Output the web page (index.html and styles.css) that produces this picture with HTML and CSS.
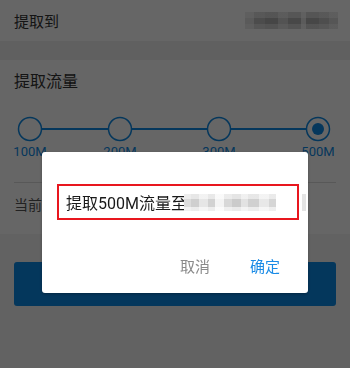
FILE: index.html
```html
<!DOCTYPE html>
<html lang="zh-CN">

<head>
    <meta charset="UTF-8">
    <meta name="viewport" content="width=device-width, initial-scale=1.0">
    <title>提取流量</title>
    <link rel="stylesheet" href="styles.css">
</head>

<body>
    <div class="page">
        <!-- Target row -->
        <div class="row">
            <span class="row-label">提取到</span>
            <span class="mask mask-top"></span>
        </div>
        <div class="band"></div>

        <!-- Amount picker -->
        <div class="section">
            <div class="section-title">提取流量</div>
            <svg class="track" width="350" height="28" viewBox="0 0 350 28">
                <g stroke="#0d8ae6" stroke-width="2" fill="none">
                    <line x1="42" y1="14" x2="108" y2="14" />
                    <line x1="132" y1="14" x2="207" y2="14" />
                    <line x1="231" y1="14" x2="306" y2="14" />
                </g>
                <g stroke="#0d8ae6" stroke-width="1.5" fill="none">
                    <circle cx="30" cy="14" r="11.5" />
                    <circle cx="120" cy="14" r="11.5" />
                    <circle cx="219" cy="14" r="11.5" />
                    <circle cx="318" cy="14" r="11.5" />
                </g>
                <circle cx="318" cy="14" r="6" fill="#0d8ae6" />
            </svg>
            <div class="steps">
                <span>100M</span>
                <span>200M</span>
                <span>300M</span>
                <span>500M</span>
            </div>
            <div class="divider"></div>
            <div class="current">当前</div>
        </div>

        <div class="footer">
            <button class="submit"></button>
        </div>
    </div>

    <!-- Confirm dialog -->
    <div class="backdrop"></div>
    <div class="dialog-wrap">
        <div class="dialog">
            <div class="message">提取500M流量至<span class="mask mask-dialog"></span></div>
            <div class="actions">
                <span class="cancel">取消</span>
                <span class="ok">确定</span>
            </div>
        </div>
    </div>
</body>

</html>
```

FILE: styles.css
```css
body {
    margin: 0;
    font-family: Roboto, "Noto Sans CJK SC", sans-serif;
    background-color: #f5f5f5;
    color: #333;
}

.page {
    width: 350px;
    height: 368px;
    background: #f5f5f5;
}

.row {
    height: 41px;
    padding: 0 12px 0 14px;
    display: flex;
    align-items: center;
    justify-content: space-between;
    background: #fff;
    font-size: 15px;
}

.mask {
    display: inline-block;
    height: 17px;
}

.mask-top {
    width: 93px;
    background:
        linear-gradient(180deg, rgba(255, 255, 255, 0.45) 0 35%, transparent 35% 72%, rgba(255, 255, 255, 0.4) 72%),
        linear-gradient(90deg, #e0e0e0 0 10%, #bdbdbd 10% 22%, #b0b0b0 22% 36%, #cfcfcf 36% 46%, #b5b5b5 46% 60%, #e4e4e4 60% 66%, #b2b2b2 66% 80%, #c2c2c2 80% 90%, #d8d8d8 90% 100%);
}

.band {
    height: 19px;
    background: #f0f0f0;
}

.section {
    background: #fff;
    padding: 12px 0 19px;
}

.section-title {
    padding: 0 14px;
    font-size: 16px;
    line-height: 20px;
}

.track {
    display: block;
    margin-top: 23px;
}

.steps {
    display: flex;
    margin: 1px 10px 0;
    font-size: 13px;
    line-height: 16px;
    color: #0d8ae6;
}

.steps span {
    width: 40px;
    text-align: center;
}

.steps span + span {
    margin-left: 59px;
}

.steps span:nth-child(2) {
    margin-left: 50px;
}

.divider {
    height: 1px;
    margin: 22px 14px 0;
    background: #ddd;
}

.current {
    padding: 12px 14px 0;
    font-size: 14px;
    line-height: 20px;
    color: #555;
}

.footer {
    padding: 28px 14px 0;
}

.submit {
    display: block;
    width: 100%;
    height: 44px;
    border: none;
    border-radius: 3px;
    background: #0c89e6;
}

/* dialog */
.backdrop {
    position: fixed;
    inset: 0;
    background: rgba(0, 0, 0, 0.6);
}

.dialog-wrap {
    position: fixed;
    inset: 0;
    display: flex;
    justify-content: center;
    align-items: flex-start;
    padding-top: 152px;
}

.dialog {
    position: relative;
    width: 266px;
    height: 141px;
    box-sizing: border-box;
    padding-top: 32px;
    background: #fff;
    border-radius: 3px;
    box-shadow: 0 1px 3px rgba(0, 0, 0, 0.3);
}

.dialog::after {
    content: "";
    position: absolute;
    right: 2px;
    top: 42px;
    width: 4px;
    height: 17px;
    background: #e4e4e4;
}

.message {
    height: 36px;
    box-sizing: border-box;
    margin: 0 9px 0 15px;
    padding-left: 7px;
    display: flex;
    align-items: center;
    border: 2.5px solid #e8161e;
    font-size: 16px;
    color: #1a1a1a;
    white-space: nowrap;
}

.mask-dialog {
    width: 92px;
    margin-left: -3px;
    background:
        linear-gradient(180deg, rgba(255, 255, 255, 0.5) 0 30%, transparent 30% 75%, rgba(255, 255, 255, 0.6) 75%),
        linear-gradient(90deg, #dcdcdc 0 8%, #cfcfcf 8% 16%, #e6e6e6 16% 26%, #d2d2d2 26% 34%, #f4f4f4 34% 44%, #d8d8d8 44% 52%, #cbcbcb 52% 62%, #e2e2e2 62% 70%, #d0d0d0 70% 82%, #e8e8e8 82% 92%, #d6d6d6 92% 100%);
}

.actions {
    display: flex;
    justify-content: flex-end;
    gap: 40px;
    margin-top: 37px;
    padding-right: 28px;
    font-size: 15px;
    line-height: 20px;
}

.cancel {
    color: #8a8a8a;
}

.ok {
    color: #1a8be6;
}
```
